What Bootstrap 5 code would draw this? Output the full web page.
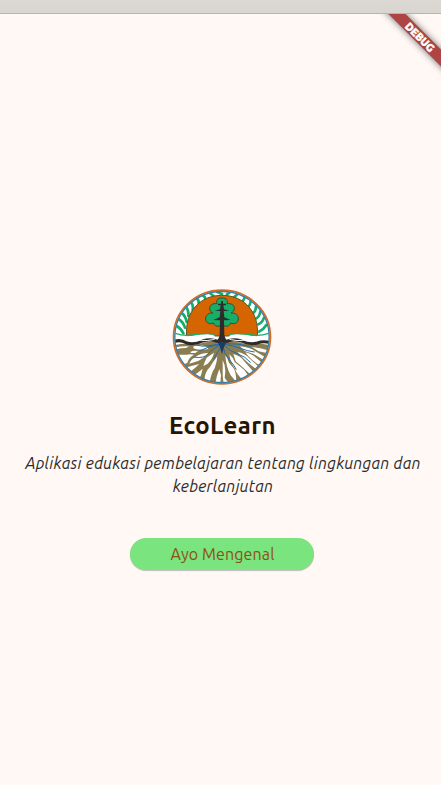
<!DOCTYPE html>
<html lang="id">
<head>
<meta charset="utf-8">
<meta name="viewport" content="width=device-width, initial-scale=1">
<title>EcoLearn</title>
<link href="https://cdn.jsdelivr.net/npm/bootstrap@5.3.0/dist/css/bootstrap.min.css" rel="stylesheet">
<style>
body{background:#fff8f5;font-family:Ubuntu,"Open Sans","Noto Sans",sans-serif;color:#231a11}
.window-bar{height:14px;background:linear-gradient(#dcd9d5,#d9d6d0);border-bottom:1px solid #b9b3ad}
.hero{padding-top:271px}
.emblem{width:106px;height:104px;margin-left:3px}
.app-title{font-size:24px;line-height:32px;font-weight:700;letter-spacing:.4px;color:#271500;margin-top:21px;margin-left:4px}
.tagline{font-size:16px;line-height:23px;font-style:italic;letter-spacing:.26px;color:#2b2b2b;margin-top:10px;margin-left:5px;white-space:nowrap}
.start{width:184px;height:32px;margin-top:40px;margin-left:3px;padding:0 0 0 1px;background:#7ae47e;color:#8b5014;font-size:16px;line-height:32px;letter-spacing:.12px;box-shadow:0 1px 1px rgba(0,0,0,.25)}
.start:hover{background:#70da75;color:#8b5014}
.banner-clip{width:80px;height:80px;top:14px;right:0}
.debug-banner{width:120px;height:12px;left:-1px;top:17px;transform:rotate(45deg);background:#ad4544;color:#fff;font-size:10.6px;font-weight:900;line-height:12px;-webkit-text-stroke:.5px #fff;box-shadow:0 0 7px rgba(0,0,0,.55)}
</style>
<script src="https://cdn.jsdelivr.net/npm/bootstrap@5.3.0/dist/js/bootstrap.bundle.min.js"></script>
</head>
<body class="vh-100 overflow-hidden position-relative">
<header class="window-bar"></header>
<div class="banner-clip position-absolute overflow-hidden"><div class="debug-banner position-absolute text-center">DEBUG</div></div>
<main class="hero d-flex flex-column align-items-center text-center">
<svg class="emblem" viewBox="-3 -3 318 312" role="img" aria-label="Logo">
<defs><clipPath id="disc"><ellipse cx="156" cy="153" rx="142" ry="137"/></clipPath></defs>
<ellipse cx="156" cy="153" rx="143" ry="138" fill="#fff"/>
<g clip-path="url(#disc)">
<!-- leaf wreath -->
<path fill="none" stroke="#15ad69" stroke-width="8" stroke-linecap="round" d="M20 120q14 8 20 22M25 99q15 9 20 26M34 80q13 10 16 28M47 62q10 10 8 28M62 48q9 8 6 24M78 36q10 5 8 19M97 27q8 4 10 13M119 21l12 9M142 18l14 6M179 19l-8 6M203 24l-11 10M224 34q-2 10-9 14M242 46q-1 12-8 18M258 61q0 13-8 20M271 77q-3 15-12 20M282 95q-5 15-17 20M289 117q-7 12-22 20"/>
<path d="M50 150C44 80 88 28 156 28s112 52 106 122z" fill="#d56500" stroke="#5c562b" stroke-width="3"/>
<!-- hills -->
<path d="M12 145q25 9 52 4 70-12 72 5 0 7-12 9h64q-12-2-12-9 2-17 72-5 27 5 52-4v40H12z" fill="#fff"/>
<path d="M16 142q25 9 50 5 66-9 69 3M296 142q-25 9-50 5-66-9-69 3" fill="none" stroke="#18ad6b" stroke-width="4"/>
<!-- root mass with the gaps between the roots -->
<path d="M10 178q30-6 52-4 26 2 44-5 25-5 50 2 25-7 50-2 18 7 44 5 22-2 52 4v125H10z" fill="#8b7d50"/>
<g fill="#fff">
<path d="M72 181q18-7 38 1 10 6 0 8-23 2-36-2-8-4-2-7zM18 184q17-5 39-3l-9 5q-15 0-29 4zM62 197q10-5 22-2l-8 6H62zM18 203q16 6 42 2l12 1q-15 8-20 24l-18 10Q20 222 18 203z"/>
<path d="M76 213q16-12 39-12-12 15-29 23l-28 9q4-12 18-20zM43 246q20-6 45-12-20 19-34 28zM110 215l22-15q-4 18-19 33l-13 7q3-11 10-25zM65 270q16-6 33-22-2 18-14 36zM103 282q2-25 17-39 8-14 22-32-1 18-8 36-11 15-15 43l-16-3zM136 292q4-24 12-43l5 19q-2 15-1 25z"/>
<path d="M158 222q8 14 8 34l-2 20 14 17-17 3-3-28zM166 208q7 8 11 22l15 18q7 16 7 40l-17-20q-14-24-16-60zM178 205q12 10 16 23l29 24 15 22-18 9q-22-20-25-35-13-16-17-43z"/>
<path d="M190 204q24 7 30 19l34 38-10 7-27-25-20-17zM202 198q23 4 35 18l26 23-4 11-25-20-13-12zM226 199q22 4 48 30l-5 8q-20-11-34-26zM210 181q29 3 48 16l26 15-3 10-32-19-25-8zM246 183q18 1 49 10l-2 9-27-6z"/>
</g>
<path d="M14 166q18-6 36 5 24 6 48-6 26-8 50 3l8 12 8-12q24-11 50-3 24 12 48 6 18-7 38-1" fill="none" stroke="#302b2b" stroke-width="9"/>
<path d="M75 160q40 9 67-4M237 160q-40 9-67-4" fill="none" stroke="#fff" stroke-width="3"/>
<g fill="none" stroke="#1f6cab" stroke-width="3"><path d="M153 174q-28 4-42 6t-34-3M151 177q-23 10-36 26t-44 10M154 182q-12 16-23 38M159 181q3 23 18 39t22 31M162 178q20 19 42 26t38 26M163 175q28 4 48 12t43 11M166 173q34-1 76 8M148 175q-36 7-59 20"/></g>
<path d="M144 169h24l-7 17-5 19-5-19z" fill="#173d67"/>
<!-- tree -->
<path d="M156 36c-15 0-18 9-15 17-13-2-22 5-22 14 0 7 4 12 10 14-14-1-23 7-22 18 1 12 12 17 23 12 4 11 14 12 26 6 12 6 22 5 26-6 11 5 22 0 23-12 1-11-8-19-22-18 6-2 10-7 10-14 0-9-9-16-22-14 3-8 0-17-15-17z" fill="#16ae69" stroke="#28533b" stroke-width="3"/>
<path d="M153 45h6v8h9v5h-8l2 12 16 5h-17l2 19 19 8-20 1 1 44q3 16 15 22h-44q12-6 15-22l1-44-20-1 19-8 2-19h-17l16-5 2-12h-8v-5h9z" fill="#302b2b"/>
</g>
<ellipse cx="156" cy="153" rx="145.5" ry="140.5" fill="none" stroke="#d36c22" stroke-width="5"/>
<ellipse cx="156" cy="153" rx="141.5" ry="136.5" fill="none" stroke="#347fac" stroke-width="4"/>
</svg>
<h1 class="app-title mb-0">EcoLearn</h1>
<p class="tagline mb-0">Aplikasi edukasi pembelajaran tentang lingkungan dan<br>keberlanjutan</p>
<button type="button" class="start btn border-0 rounded-pill">Ayo Mengenal</button>
</main>
</body>
</html>
